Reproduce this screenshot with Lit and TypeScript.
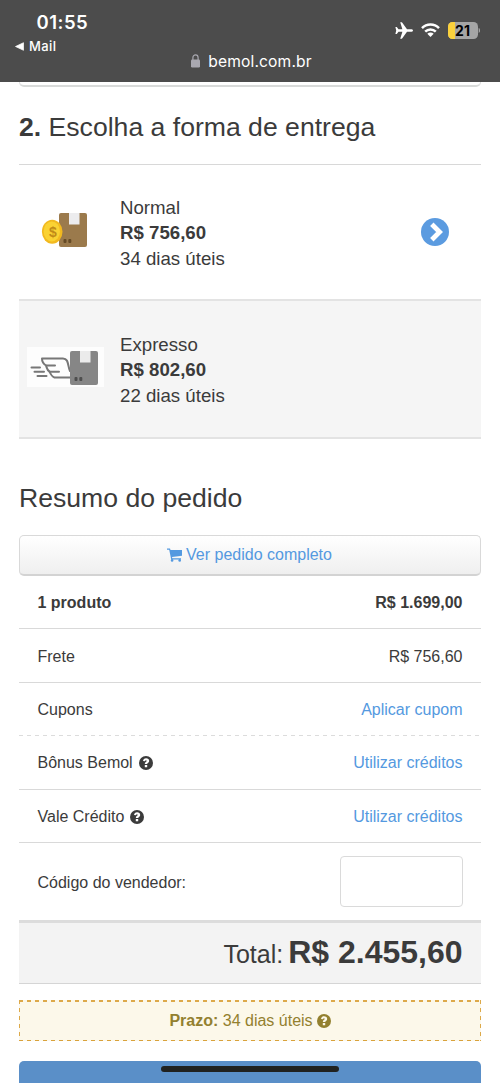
import { LitElement, html, css, svg } from "lit";
import { customElement } from "lit/decorators.js";

const help = html`<svg class="help" viewBox="0 0 14 14">
  <circle cx="7" cy="7" r="7" fill="currentColor" />
  <path d="M4 5.100C4.200 3.200 5.300 2.200 7.100 2.200c1.800 0 3.100 1.100 3.100 2.700 0 1.900-2 2-2 3.200H5.800c0-2.100 1.900-2.200 1.900-3.100 0-.4-.3-.7-.8-.7s-.8.3-.9.900zM5.800 9h2.400v2.300H5.800z" fill="var(--mark, #fff)" />
</svg>`;

const chevron = html`<svg class="chevron" viewBox="0 0 28 28">
  <circle cx="14" cy="14" r="14" fill="#5b9be0" />
  <path d="M10.800 6.200l7.800 7.800-7.800 7.800" fill="none" stroke="#fff" stroke-width="4.800" />
</svg>`;

const box = (body: string, tape: string, marks: string, x: number, y: number) => svg`
  <rect x=${x} y=${y} width="28" height="34" rx="2" fill=${body} />
  <rect x=${x + 10} y=${y} width="10.5" height="11.5" fill=${tape} />
  <rect x=${x + 4.5} y=${y + 26} width="3" height="4" rx="1" fill=${marks} />
  <rect x=${x + 9.3} y=${y + 26} width="3" height="4" rx="1" fill=${marks} />`;

const normalIcon = html`<svg class="pic" viewBox="0 0 78 41">
  ${box("#9b7a4c", "#ececee", "#654a25", 32, 3)}
  <ellipse cx="25.2" cy="21.7" rx="10.3" ry="12" fill="#f2b91f" />
  <ellipse cx="24.8" cy="21.4" rx="8.2" ry="10" fill="#fad233" />
  <text class="coin" x="26" y="26.500" text-anchor="middle">$</text>
</svg>`;

const expressIcon = html`<svg class="pic" viewBox="0 0 78 41">
  <rect width="77" height="40" fill="#fdfdfd" />
  <g fill="none" stroke="#777" stroke-width="2" stroke-linecap="round" stroke-linejoin="round">
    <path d="M44 30.500H27.500C24.500 29.500 23.500 27 22.500 24.500C20 23.500 20 21 19 18.500C16.500 17 15 14.500 15 11.500H36C42 11.500 40.500 19 43 24" />
    <path d="M19 18.500H28M22.500 24.700H32M4.500 20.500H13M7.500 24.700H17M10.500 29H19.500" />
  </g>
  ${box("#868686", "#ebebeb", "#4e4e4e", 43, 4)}
</svg>`;

@customElement("app-root")
export class AppRoot extends LitElement {
  static styles = css`
    :host {
      display: block;
      height: 1083px;
      overflow: hidden;
      position: relative;
      background: #fff;
      color: #3b3b3b;
      font: 16px/20px "Liberation Sans", Arial, sans-serif;
    }
    * { box-sizing: border-box; }
    svg { display: block; flex: none; }
    .phone {
      height: 82px;
      background: #4c4c4c;
      color: #fff;
      font-family: Inter, "Liberation Sans", sans-serif;
      padding-top: 12px;
    }
    .status { display: flex; justify-content: space-between; height: 41px; }
    .time { font-size: 18.5px; font-weight: 600; line-height: 20px; padding-left: 36.5px; letter-spacing: 0.5px; }
    .back { display: flex; align-items: center; gap: 5px; padding-left: 15px; margin-top: 6px; font-size: 13px; line-height: 16px; font-weight: 500; letter-spacing: 0.4px; }
    .signals { display: flex; align-items: center; height: 36px; padding-right: 20px; gap: 8px; }
    .address { display: flex; justify-content: center; gap: 8px; line-height: 18px; font-size: 15.6px; letter-spacing: 0.15px; padding-left: 3px; }
    .lock { margin-top: 1px; }
    .level { font: 700 14px Inter, sans-serif; }
    .coin { font: 700 14px "Liberation Sans", sans-serif; fill: #c18a17; }
    .page { padding: 0 19px; }
    .edge { height: 5px; border: 1px solid #ddd; border-top: 0; border-bottom: 2px solid #d8dad9; border-radius: 0 0 5px 5px; }
    .title { margin: 0; font-size: 26.6px; font-weight: 400; line-height: 32px; }
    .step { height: 78px; padding-top: 24px; border-bottom: 1px solid #d8d8d8; }
    .option { display: flex; align-items: center; padding: 0 32px 0 8px; height: 136px; border-bottom: 2px solid #e3e3e3; font-size: 18.67px; line-height: 25.4px; }
    .express { height: 138px; background: #f5f5f5; }
    .pic { width: 78px; height: 41px; margin-bottom: 4px; }
    .info { flex: 1; padding: 2px 0 0 15px; }
    .chevron { width: 28px; height: 28px; }
    .summary { margin-top: 43px; height: 53px; }
    .full { display: flex; justify-content: center; align-items: center; gap: 4px; height: 41px; color: #5499e0; border: 1px solid #d9d9d9; border-bottom: 2px solid #d3d3d3; border-radius: 5px; background: linear-gradient(#fff, #efefef); padding-right: 1px; }
    .row { display: flex; align-items: center; justify-content: space-between; height: 53.4px; padding: 2px 18.5px 0; border-bottom: 1px solid #d9d9d9; }
    .strong { font-weight: 700; }
    .dashed { border-bottom: 0; background: repeating-linear-gradient(90deg, #dcdcdc 0 4px, transparent 4px 8px) left bottom / 100% 1px no-repeat; }
    .seller { height: 77px; border-bottom: 0; padding-top: 0; }
    .seller .name { padding-top: 3px; }
    .name { display: flex; align-items: center; gap: 6px; }
    .help { width: 14px; height: 14px; }
    .link { color: #5499e0; }
    .code { width: 123px; height: 51px; border: 1px solid #dadada; border-radius: 4px; background: #fff; padding: 0 10px; font: inherit; }
    .total { display: flex; justify-content: flex-end; align-items: baseline; gap: 5px; height: 64px; padding: 11px 18.5px 0 0; background: #f3f3f3; border-top: 3px solid #dcdcdc; border-bottom: 1px solid #d5d5d5; font-size: 25px; line-height: 36px; }
    .sum { font-size: 32px; }
    .deadline { display: flex; justify-content: center; align-items: center; margin-top: 16px; height: 41px; padding-top: 1px; color: #93802f; --mark: #fcf8ea; white-space: pre;
      background:
        repeating-linear-gradient(90deg, #dda94a 0 4px, transparent 4px 8px) top / 100% 2px no-repeat,
        repeating-linear-gradient(90deg, #d9a23c 0 4px, transparent 4px 8px) bottom / 100% 1px no-repeat,
        repeating-linear-gradient(#dda94a 0 4px, transparent 4px 8px) left / 1px 100% no-repeat,
        repeating-linear-gradient(#dda94a 0 4px, transparent 4px 8px) right / 1px 100% no-repeat,
        #fcf8ea; }
    .deadline .help { margin-left: 4px; }
    .submit { margin-top: 20px; height: 40px; border-radius: 5px; background: #5a8fc8; }
    .home { position: absolute; left: 161px; top: 1066px; width: 178px; height: 6px; border-radius: 3px; background: #20211f; }
  `;

  private row(name: unknown, value: unknown, kind = "") {
    return html`<div class="row ${kind}"><span class="name">${name}</span>${value}</div>`;
  }

  render() {
    const credits = html`<span class="link">Utilizar créditos</span>`;
    return html`
      <header class="phone">
        <div class="status">
          <div>
            <div class="time">01:55</div>
            <div class="back">
              <svg width="9" height="9" viewBox="0 0 9 9"><path d="M.5 4.500L8.500.7v7.600z" fill="#fff" stroke="#fff" stroke-linejoin="round" stroke-width=".7" /></svg>Mail
            </div>
          </div>
          <div class="signals">
            <svg width="18" height="17" viewBox="0 0 18 17"><path fill="#fff" d="M18 8.500c0-.8-.9-1.300-2-1.300h-4L7.300.8C7 .4 6.700.3 6.300.3H5.200l2.200 6.900H3.500L1.800 5H.4l.8 3.500L.4 12h1.400l1.700-2.200h3.900l-2.200 6.900h1.100c.4 0 .7-.1 1-.5L12 9.800h4c1.100 0 2-.5 2-1.300z" /></svg>
            <svg width="19" height="14" viewBox="0 0 19 14"><g fill="none" stroke="#fff" stroke-width="2.500"><path d="M1 5.100C5.700.4 13.300.4 18 5.100" /><path d="M4.200 8.600c2.900-2.900 7.700-2.900 10.600 0" /></g><path d="M6.300 10.700c1.800-1.700 4.600-1.700 6.400 0L9.500 13.900z" fill="#fff" /></svg>
            <svg width="32" height="17" viewBox="0 0 32 17"><rect width="30" height="17" rx="4.500" fill="#a5a5a5" /><path d="M4.500 0H7v17H4.500A4.500 4.500 0 0 1 0 12.500v-8A4.500 4.500 0 0 1 4.500 0z" fill="#fbd13c" /><path d="M30.700 6c2 .8 2 4.200 0 5z" fill="#a5a5a5" /><text class="level" x="14.500" y="13.500" text-anchor="middle">21</text></svg>
          </div>
        </div>
        <div class="address">
          <svg class="lock" width="9" height="14" viewBox="0 0 9 14"><rect y="5.500" width="9" height="8" rx="1.200" fill="#a9a8b0" /><path d="M1.900 6V3.700c0-3.700 5.200-3.700 5.200 0V6" fill="none" stroke="#a9a8b0" stroke-width="1.200" /></svg>
          <span>bemol.com.br</span>
        </div>
      </header>
      <main class="page">
        <div class="edge"></div>
        <h2 class="title step"><b>2.</b> Escolha a forma de entrega</h2>
        <section class="option">
          ${normalIcon}
          <div class="info"><div>Normal</div><b>R$ 756,60</b><div>34 dias úteis</div></div>
          ${chevron}
        </section>
        <section class="option express">
          ${expressIcon}
          <div class="info"><div>Expresso</div><b>R$ 802,60</b><div>22 dias úteis</div></div>
        </section>
        <h2 class="title summary">Resumo do pedido</h2>
        <div class="full">
          <svg width="15" height="14" viewBox="0 0 15 14"><path fill="#5499e0" d="M0 .5h3l.5 1.500H15v5.800L5 9l.3 1.200H14v1.200H4.200L2.200 1.800H0z" /><circle cx="5.100" cy="12.400" r="1.300" fill="#5499e0" /><circle cx="12.700" cy="12.400" r="1.300" fill="#5499e0" /></svg>
          <span>Ver pedido completo</span>
        </div>
        ${this.row("1 produto", html`<span>R$ 1.699,00</span>`, "strong")}
        ${this.row("Frete", html`<span>R$ 756,60</span>`)}
        ${this.row("Cupons", html`<span class="link">Aplicar cupom</span>`, "dashed")}
        ${this.row(html`Bônus Bemol ${help}`, credits)}
        ${this.row(html`Vale Crédito ${help}`, credits)}
        ${this.row("Código do vendedor:", html`<input class="code" />`, "seller")}
        <div class="total"><span>Total:</span><b class="sum">R$ 2.455,60</b></div>
        <div class="deadline"><b>Prazo:</b><span> 34 dias úteis</span>${help}</div>
        <div class="submit"></div>
      </main>
      <div class="home"></div>
    `;
  }
}
